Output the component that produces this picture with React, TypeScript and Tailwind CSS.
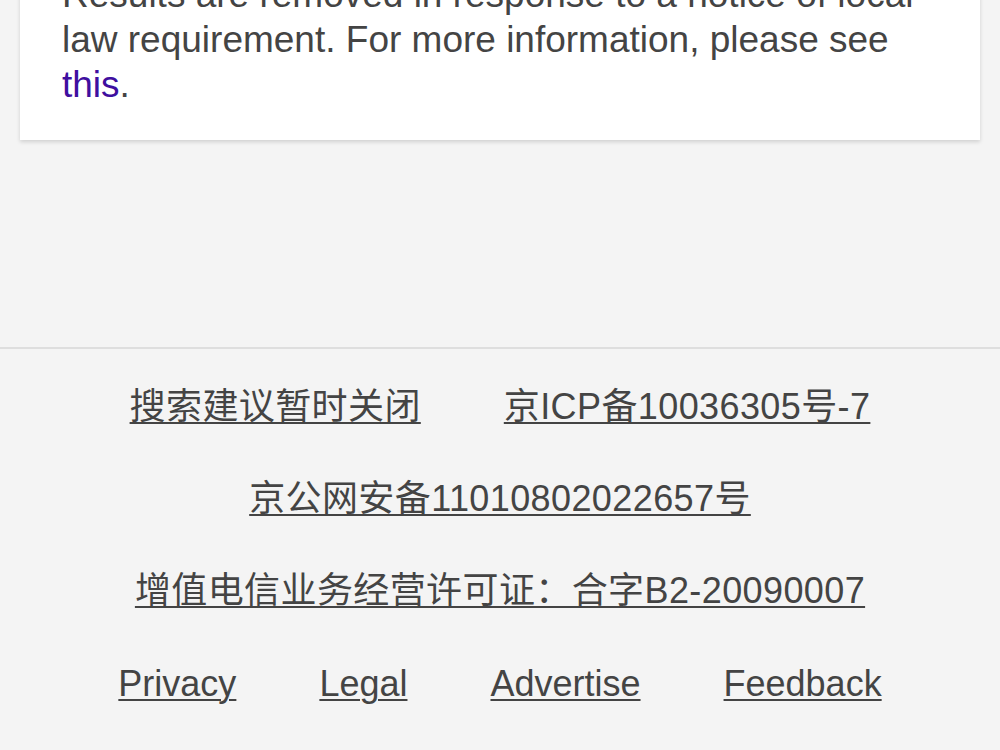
const topLinks = ["搜索建议暂时关闭", "京ICP备10036305号-7", "京公网安备11010802022657号", "增值电信业务经营许可证：合字B2-20090007"];
const bottomLinks = ["Privacy", "Legal", "Advertise", "Feedback"];

export default function App() {
  return (
    <div
      className="h-[750px] overflow-hidden bg-[#f4f4f4] text-[#444]"
      style={{ fontFamily: '"Liberation Sans", "Noto Sans CJK SC", sans-serif' }}
    >
      <div className="mx-[20px] -mt-[60px] bg-white pt-[32px] pb-[33px] px-[42px] shadow-[0_2px_4px_rgba(0,0,0,0.15)]">
        <p className="text-[37px] leading-[45px]">
          Results are removed in response to a notice of local law requirement. For more information, please see{" "}
          <a href="#" className="text-[#3f0f9f]">this</a>.
        </p>
      </div>

      <footer className="mt-[207px] border-t-2 border-[#dedede] pt-[32px]">
        <div className="flex flex-wrap justify-center gap-x-[83px] gap-y-[40px] text-[36px] leading-[52px] tracking-[0.4px]">
          {topLinks.map((t) => (
            <a key={t} href="#" className="underline decoration-2 underline-offset-[3px]">
              {t}
            </a>
          ))}
        </div>
        <div className="mt-[41px] flex justify-center gap-x-[83px] text-[36px] leading-[52px]">
          {bottomLinks.map((t) => (
            <a key={t} href="#" className="underline decoration-2 underline-offset-[3px]">
              {t}
            </a>
          ))}
        </div>
      </footer>
    </div>
  );
}
